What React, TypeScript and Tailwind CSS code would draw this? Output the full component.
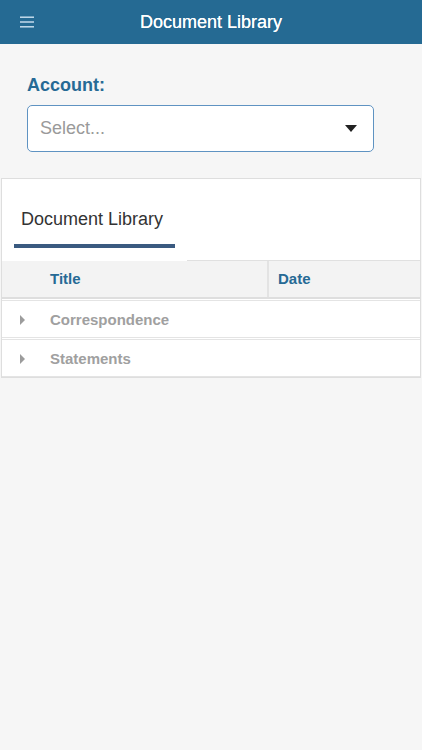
const rows = ["Correspondence", "Statements"]

const MenuIcon = () => (
  <svg width="16" height="12" viewBox="0 0 16 12" className="text-[#cfe3f2]">
    <rect x="1" y="0.5" width="14" height="1.4" fill="currentColor" />
    <rect x="1" y="5.3" width="14" height="1.4" fill="currentColor" />
    <rect x="1" y="10.1" width="14" height="1.4" fill="currentColor" />
  </svg>
)

const App = () => {
  return (
    <div className="min-h-[750px] bg-[#f6f6f6] font-['Liberation_Sans',Arial,sans-serif]">
      <header className="relative flex h-[44px] items-center justify-center bg-[#256a93]">
        <button className="absolute left-[19px] top-[16px]">
          <MenuIcon />
        </button>
        <h1 className="text-[18px] text-white [text-shadow:0_0_0.4px_white]">Document Library</h1>
      </header>

      <section className="px-[27px] pt-[30px] pb-[26px]">
        <label className="block text-[18px] font-bold leading-[22px] text-[#266a95]">
          Account:
        </label>
        <div className="mt-[9px] flex h-[47px] w-[347px] items-center justify-between rounded-[5px] border border-[#5f93c2] bg-white pl-[12px] pr-[16px]">
          <span className="text-[18px] text-[#9a9a9a]">Select...</span>
          <svg width="12" height="7" viewBox="0 0 12 7">
            <path d="M0 0 L12 0 L6 7 Z" fill="#222" />
          </svg>
        </div>
      </section>

      <div className="ml-[1px] w-[420px] border border-[#dedede] bg-white">
        <div className="flex h-[82px]">
          <div className="w-[185px] pl-[12px] pt-[28px]">
            <div className="pl-[7px] text-[18px] leading-[24px] text-[#333]">
              Document Library
            </div>
            <div className="mt-[13px] h-[4px] w-[161px] bg-[#3a5a80]" />
          </div>
          <div className="flex-1 border-b border-[#e0e0e0]" />
        </div>

        <div className="flex h-[38px] border-b-2 border-[#dedede] bg-[#f3f3f3] text-[15px] font-bold text-[#266a95]">
          <div className="flex w-[267px] items-center border-r-2 border-[#e3e3e3] pl-[48px]">Title</div>
          <div className="flex items-center pl-[9px]">Date</div>
        </div>

        {rows.map((r) => (
          <div
            key={r}
            className="mt-[1px] flex h-[38px] items-center border-t border-b border-[#e4e4e4] bg-white pt-[2px] text-[15px] font-bold text-[#a0a0a0]"
          >
            <svg width="5" height="10" viewBox="0 0 5 10" className="ml-[18px]">
              <path d="M0 0 L5 5 L0 10 Z" fill="#9c9c9c" />
            </svg>
            <span className="ml-[25px]">{r}</span>
          </div>
        ))}
      </div>
    </div>
  )
}

export default App
